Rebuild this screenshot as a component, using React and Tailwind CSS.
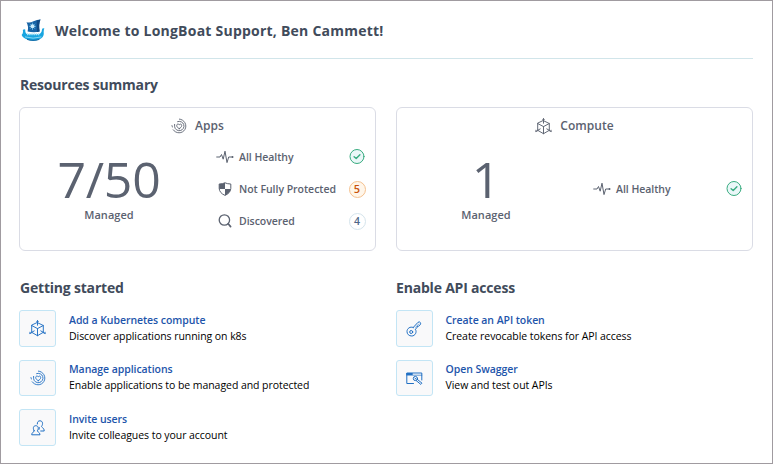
import React from "react";

const line = { fill: "none", stroke: "currentColor", strokeLinecap: "round", strokeLinejoin: "round" };

function BoatLogo() {
  return (
    <svg className="block h-6 w-6" viewBox="0 0 24 24">
      <path d="M5.5 4.2Q9 5.4 12.5 3.2Q16 1.6 19.5 1.6Q17.4 6 18.6 13.6Q13 15 6.6 13.6Q7.8 8 5.5 4.2Z" fill="#1763a5" />
      <path d="M15.8 2.4L19.5 1.6Q17.4 6 18.6 13.6L16 14Z" fill="#104a84" />
      <path d="M11.5 4.6V12M8 8.3H15M9 5.8L14 10.8M14 5.8L9 10.8" stroke="#5fb2e0" strokeWidth=".9" />
      <circle cx="11.5" cy="8.3" r="2" fill="#c9ecfb" />
      <path d="M.6 17Q2.6 15 1.8 12.4Q2.4 10.6 4.2 11.4Q4.2 16 6.8 16.2H17.6Q20.6 16 21 11.6Q21.4 9.4 23.4 10.6Q22.4 12 22.8 15.6Q22.8 19 19.6 20.8Q12 24.2 4.4 20.8Q1.4 19.4 .6 17Z" fill="#18a5e0" />
      <path d="M6 16.2H18.6" stroke="#a9e3f8" strokeWidth="2" strokeDasharray="1.3 .9" />
      <path d="M4 18.9Q12 21.4 20.4 18.9" fill="none" stroke="#8bdaf5" strokeWidth=".9" />
      <path d="M6 21.2Q12 23.6 18.4 21.2" fill="none" stroke="#1672ad" strokeWidth="1.1" />
    </svg>
  );
}

function AppsIcon() {
  return (
    <svg className="block h-4 w-4 shrink-0" viewBox="0 0 16 16" {...line} strokeWidth=".9">
      <path d="M8.2 10.6C6.6 9.8 5.7 8.8 5.7 7.5C5.7 5.9 7.4 5.6 8.2 6.8C9 5.6 10.7 5.9 10.7 7.5C10.7 8.8 9.8 9.8 8.2 10.6Z" />
      <path d="M6.6 3.6A4.7 4.7 0 1 1 3.6 8.6V6.4" />
      <path d="M8.4 1.1A6.9 6.9 0 1 1 2.2 11.8M.9 7.6Q.8 9 1.6 9.2" />
    </svg>
  );
}

function CubeIcon() {
  return (
    <svg className="block h-[17px] w-[17px] shrink-0" viewBox="0 0 17 17" {...line} strokeWidth=".95">
      <path d="M8.5 2.7L14.3 5.5V12.3L8.5 15.7L2.7 12.3V5.5ZM2.7 5.5L8.5 8.6L14.3 5.5M8.5 8.6V15.7" />
      <path d="M8.5 .6V5.2M.8 13.4L5.2 10.9M16.2 13.4L11.8 10.9" />
      <path d="M7.5 1.5L8.5 .6L9.5 1.5M.8 12.2V13.4H2M16.2 12.2V13.4H15" strokeWidth=".7" />
    </svg>
  );
}

function PulseIcon() {
  return (
    <svg className="block h-[14px] w-[18px]" viewBox="0 0 18 14" {...line} strokeWidth="1">
      <path d="M.7 7H4L5.5 4.5L7.2 9.2L9 1.2L11 12.6L12.7 7H16.8" />
      <circle cx="16.5" cy="7" r=".9" fill="currentColor" stroke="none" />
    </svg>
  );
}

function ShieldIcon() {
  return (
    <svg className="block h-[14px] w-[14px]" viewBox="0 0 14 14">
      <path d="M7 .8Q9.5 2 12.8 2V6.5Q12.5 11 7 13.4Q1.5 11 1.2 6.5V2Q4.5 2 7 .8Z" fill="white" stroke="currentColor" strokeWidth="1" />
      <path d="M7 .8Q4.5 2 1.2 2V7H7ZM7 7H12.7Q12.3 11 7 13.4Z" fill="currentColor" />
    </svg>
  );
}

function SearchIcon() {
  return (
    <svg className="block h-[14px] w-[14px]" viewBox="0 0 14 14" {...line} strokeWidth="1.3">
      <circle cx="6.4" cy="6" r="5.2" />
      <path d="M10.2 9.8L12.6 12.6" strokeWidth="1.7" />
    </svg>
  );
}

function UsersIcon() {
  return (
    <svg className="block h-4 w-[14px]" viewBox="0 0 14 16" {...line} strokeWidth="1">
      <path d="M3.2 10.8C1.7 8.8 2 5.7 4.8 5.7S7.8 8.8 6.4 10.8C6.2 12.2 9 12 9 14.8H.7C.7 12 3.4 12.2 3.2 10.8Z" />
      <path d="M6.3 4C6.2 1.9 7.2 .8 9 .8C11.9 .8 12.2 4.3 10.6 6.2C10.3 7.8 13.2 7.4 13.2 11H9.7M8.3 7.5C8.5 8.5 8.1 9.4 8.1 9.4" />
    </svg>
  );
}

function KeyIcon() {
  return (
    <svg className="block h-4 w-4" viewBox="0 0 16 16" {...line} strokeWidth="1">
      <path d="M7.2 6.5L12 1.3Q13.6 .3 14.4 1.6Q15 2.8 14.2 3.8L12.6 5.2L11.6 5.1L11.5 6.2L10 7.4L9.3 8.2C11.3 11.1 9 15 5.8 15C2.9 15 1 13.1 1 10.5C1 7.4 4.3 5.1 7.2 6.5Z" />
      <path d="M9.5 6.4L12.7 3" strokeWidth=".6" />
      <circle cx="5.2" cy="11" r="1.5" />
    </svg>
  );
}

function SwaggerIcon() {
  return (
    <svg className="block h-[13px] w-[17px]" viewBox="0 0 17 13" {...line} strokeWidth="1">
      <path d="M7.5 11.5H.8V1H15.8V8" />
      <path d="M.8 3.2H15.8" strokeWidth=".7" />
      <path d="M1 2H6" strokeWidth="1.8" />
      <circle cx="9.4" cy="6.5" r="2.1" />
      <path d="M11.2 7.3L16 11.2L14.8 12.4L10.2 8.6M9 6.3L10 7" />
    </svg>
  );
}

function CheckBadge() {
  return (
    <svg className="block h-4 w-4 text-[#39ac80]" viewBox="0 0 16 16" {...line}>
      <circle cx="8" cy="7.5" r="7" fill="#eaf7f8" strokeWidth="1" />
      <path d="M5.1 7.7L7.2 9.6L10.9 5.8" strokeWidth="1.4" />
    </svg>
  );
}

function StatusRow({ icon, label, children }) {
  return (
    <div className="flex h-8 items-center">
      <div className="flex w-[18px] justify-center">{icon}</div>
      <span className="ml-[5px] flex-1 whitespace-nowrap text-[10.5px] leading-4 font-semibold tracking-[-0.03px]">{label}</span>
      <div className="flex w-4 justify-center">{children}</div>
    </div>
  );
}

function SummaryCard({ icon, title, value, children }) {
  return (
    <section className="flex h-36 flex-col rounded-md border border-[#dadce5]">
      <header className="mt-[9px] flex h-[18px] items-center justify-center gap-2">
        {icon}
        <h3 className="text-xs leading-[18px] font-semibold tracking-[0.05px]">{title}</h3>
      </header>
      <div className="flex">
        <div className="flex w-[178px] flex-col items-center pt-4">
          <div className="h-[56px] text-[50px] leading-[56px] tracking-[-0.3px]">{value}</div>
          <div className="text-[11px] leading-4 font-semibold tracking-[0.05px]">Managed</div>
        </div>
        <div className="flex h-[108px] flex-1 flex-col justify-center pr-[10px] pl-[18px]">{children}</div>
      </div>
    </section>
  );
}

function ActionItem({ icon, title, text }) {
  return (
    <li className="group flex h-[37px] items-start even:h-9">
      <div className="flex h-full w-[37px] items-center justify-center rounded-[3px] border border-[#c3e5f5] bg-[#f9f9fa] text-[#2170c4]">{icon}</div>
      <div className="ml-[13px] whitespace-nowrap pt-[2px] text-[10.5px] leading-4 group-even:pt-px">
        <a className="block font-semibold tracking-[-0.06px] text-[#1e55ab]">{title}</a>
        <p className="tracking-[-0.06px] text-black">{text}</p>
      </div>
    </li>
  );
}

export default function App() {
  return (
    <main className="h-[464px] w-[773px] border border-[#a09ba0] bg-white px-[18px] font-['Open_Sans',sans-serif] text-[#5b6270]">
      <header className="flex h-[58px] w-[734px] items-center border-b border-[#d1e5ea] pl-[2px]">
        <BoatLogo />
        <h1 className="ml-[10px] pt-[3px] text-sm font-bold tracking-[0.23px] text-[#414b5b]">Welcome to LongBoat Support, Ben Cammett!</h1>
      </header>
      <h2 className="mt-4 h-5 pl-px text-sm leading-5 font-bold tracking-[-0.2px] text-[#414b5b]">Resources summary</h2>
      <div className="mt-3 grid w-[734px] grid-cols-[357px_357px] gap-5">
        <SummaryCard icon={<AppsIcon />} title="Apps" value="7/50">
          <StatusRow icon={<PulseIcon />} label="All Healthy"><CheckBadge /></StatusRow>
          <StatusRow icon={<ShieldIcon />} label="Not Fully Protected">
            <span className="flex h-[17px] w-[17px] shrink-0 items-center justify-center rounded-full border border-[#f5c18f] bg-[#fff6ea] text-[11px] font-semibold text-[#c9530b]">5</span>
          </StatusRow>
          <StatusRow icon={<SearchIcon />} label="Discovered">
            <span className="flex h-[17px] w-[17px] shrink-0 items-center justify-center rounded-full border border-[#d5e4ec] pt-px text-[10.5px] font-semibold text-[#4e6688]">4</span>
          </StatusRow>
        </SummaryCard>
        <SummaryCard icon={<CubeIcon />} title="Compute" value="1">
          <StatusRow icon={<PulseIcon />} label="All Healthy"><CheckBadge /></StatusRow>
        </SummaryCard>
      </div>
      <div className="mt-[27px] grid w-[734px] grid-cols-[357px_357px] gap-5">
        <section>
          <h2 className="h-5 pl-px text-sm leading-5 font-bold tracking-[-0.2px] text-[#414b5b]">Getting started</h2>
          <ul className="mt-3 flex flex-col gap-[13px]">
            <ActionItem icon={<CubeIcon />} title="Add a Kubernetes compute" text="Discover applications running on k8s" />
            <ActionItem icon={<AppsIcon />} title="Manage applications" text="Enable applications to be managed and protected" />
            <ActionItem icon={<UsersIcon />} title="Invite users" text="Invite colleagues to your account" />
          </ul>
        </section>
        <section>
          <h2 className="h-5 text-sm leading-5 font-bold tracking-[-0.2px] text-[#414b5b]">Enable API access</h2>
          <ul className="-ml-[0.5px] mt-3 flex flex-col gap-[13px]">
            <ActionItem icon={<KeyIcon />} title="Create an API token" text="Create revocable tokens for API access" />
            <ActionItem icon={<SwaggerIcon />} title="Open Swagger" text="View and test out APIs" />
          </ul>
        </section>
      </div>
    </main>
  );
}
